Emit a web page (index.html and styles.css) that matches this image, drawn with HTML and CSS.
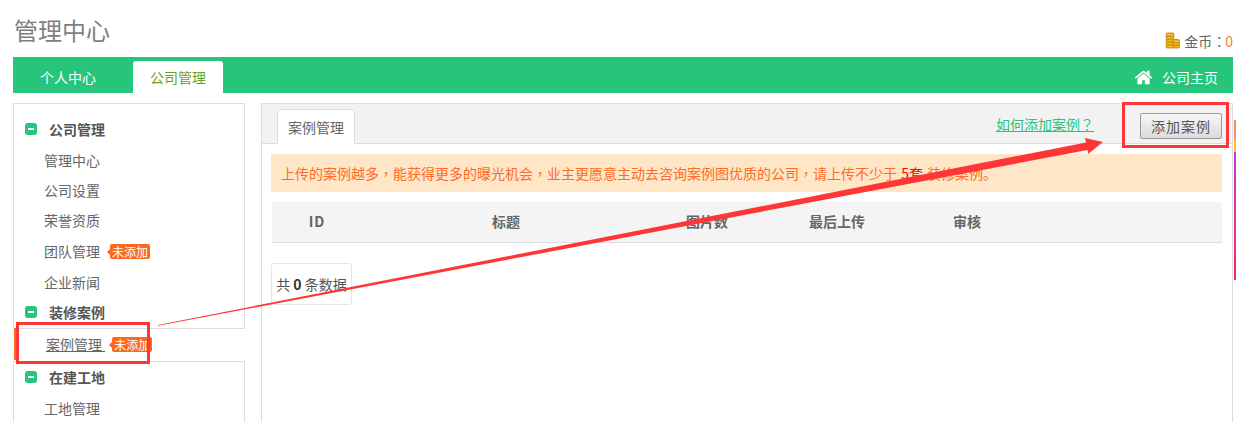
FILE: index.html
```html
<!DOCTYPE html>
<html lang="zh-CN">
<head>
<meta charset="utf-8">
<title>管理中心</title>
<link rel="stylesheet" href="styles.css">
</head>
<body>
<div class="page">
  <header class="top">
    <h1 class="title">管理中心</h1>
    <div class="gold">
      <svg class="coins" viewBox="0 0 15 17" aria-hidden="true">
        <g fill="#f5b81f" stroke="#b87a08" stroke-width=".8">
          <rect x="1" y="12.500" width="8" height="3.500" rx="1.600"/>
          <rect x="1" y="9.500" width="8" height="3.500" rx="1.600"/>
          <rect x="1" y="6.500" width="8" height="3.500" rx="1.600"/>
          <rect x="1" y="3.700" width="8" height="3.500" rx="1.600"/>
          <rect x="1" y="1" width="8" height="3.500" rx="1.600"/>
          <rect x="8" y="12.500" width="6.500" height="3.500" rx="1.500"/>
          <rect x="8" y="10" width="6.500" height="3.500" rx="1.500"/>
          <rect x="8" y="7.500" width="6.500" height="3.500" rx="1.500"/>
        </g>
      </svg>
      <span>金币<span class="pt" lang="zh-TW">：</span></span><span class="gold-num">0</span>
    </div>
  </header>

  <nav class="nav">
    <a class="nav-item">个人中心</a>
    <a class="nav-item nav-active">公司管理</a>
    <a class="nav-home">
      <svg class="home" viewBox="0 0 1792 1792" aria-hidden="true"><path fill="#fff" d="M1472 992v480q0 26-19 45t-45 19h-384v-384h-256v384h-384q-26 0-45-19t-19-45v-480q0-1 .5-3t.5-3l575-474 575 474q1 2 1 6zm223-69l-62 74q-8 9-21 11h-3q-13 0-21-7l-692-577-692 577q-12 8-24 7-13-2-21-11l-62-74q-8-10-7-23.5t11-21.5l719-599q32-26 76-26t76 26l244 204v-195q0-14 9-23t23-9h192q14 0 23 9t9 23v408l219 182q10 8 11 21.5t-7 23.5z"/></svg>
      <span>公司主页</span>
    </a>
  </nav>

  <div class="content">
    <aside class="side">
      <div class="box box-first">
        <div class="head"><i class="minus"></i>公司管理</div>
        <a class="item">管理中心</a>
        <a class="item">公司设置</a>
        <a class="item">荣誉资质</a>
        <a class="item item-tall">团队管理<span class="badge">未添加</span></a>
        <a class="item">企业新闻</a>
        <div class="head"><i class="minus"></i>装修案例</div>
      </div>
      <div class="current">
        <a class="current-link">案例管理 </a><span class="badge badge-current">未添加</span>
      </div>
      <div class="box box-second">
        <div class="head"><i class="minus"></i>在建工地</div>
        <a class="item">工地管理</a>
      </div>
    </aside>

    <main class="main">
      <div class="tabs">
        <a class="tab">案例管理</a>
        <a class="help">如何添加案例<span class="pt" lang="zh-TW">？</span></a>
        <button class="add" type="button">添加案例</button>
      </div>
      <div class="body">
        <p class="notice">上传的案例越多<span class="pt" lang="zh-TW">，</span>能获得更多的曝光机会<span class="pt" lang="zh-TW">，</span>业主更愿意主动去咨询案例图优质的公司<span class="pt" lang="zh-TW">，</span>请上传不少于 <b class="notice-num">5套</b> 装修案例。</p>
        <table class="grid">
          <colgroup>
            <col class="c1"><col class="c2"><col class="c3"><col class="c4"><col class="c5"><col>
          </colgroup>
          <thead>
            <tr><th class="th-id">ID</th><th>标题</th><th>图片数</th><th>最后上传</th><th>审核</th><th></th></tr>
          </thead>
        </table>
        <div class="pager">共 <b>0</b> 条数据</div>
      </div>
    </main>
  </div>
</div>

<div class="strip"></div>

<svg class="marks" viewBox="0 0 1236 422" aria-hidden="true">
  <rect class="mark-box" x="17.500" y="323.500" width="131" height="39"/>
  <rect class="mark-box" x="1123.500" y="103.500" width="104" height="43"/>
  <polygon class="mark-arrow" points="158,325 1086,142.500 1085,138 1103,142 1088,154 1087.500,150 158,325.800"/>
</svg>
</body>
</html>
```
FILE: styles.css
```css
* { box-sizing: border-box; }
html, body { margin: 0; height: 422px; overflow: hidden; background: #fff; }
body {
  position: relative;
  font: 14px/20px "Noto Sans CJK SC", "Liberation Sans", sans-serif;
  color: #666;
}
a { color: inherit; }
.pt { font-family: "Noto Sans CJK TC", "Noto Sans CJK SC", sans-serif; }
.page { width: 1233px; padding-left: 13px; }

.top { height: 57px; display: flex; justify-content: space-between; align-items: flex-end; }
.title { margin: 0 0 11px 1px; font-size: 24px; line-height: 32px; font-weight: 400; color: #808080; }
.gold { display: flex; align-items: center; height: 20px; margin-bottom: 6px; color: #666; white-space: nowrap; }
.coins { width: 15px; height: 17px; margin-right: 4px; margin-top: -2px; }
.gold-num { color: #ff7a45; margin-left: -1px; }

.nav { height: 36px; background: #27c47c; display: flex; align-items: flex-end; color: #fff; }
.nav-item { width: 90px; height: 32px; line-height: 32px; text-align: center; border-radius: 3px 3px 0 0; }
.nav-item:first-child { margin-left: 10px; }
.nav-item + .nav-item { margin-left: 20px; }
.nav-active { background: #fff; color: #66a31c; }
.nav-home { margin-left: auto; margin-right: 15px; height: 36px; padding-top: 4px; display: flex; align-items: center; gap: 9px; }
.home { width: 19px; height: 19px; }

.content { display: flex; gap: 16px; margin-top: 10px; }
.side { width: 232px; flex: none; }
.box { border: 1px solid #ddd; background: #fff; }
.box-first { height: 226px; padding-top: 10px; }
.box-second { height: 61px; border-bottom: 0; overflow: hidden; }
.head { display: flex; align-items: center; height: 31px; padding: 0 0 2px 11px; font-weight: 700; color: #555; }
.minus { position: relative; width: 12px; height: 12px; margin-right: 12px; border-radius: 3px; background: #27c47c; }
.minus::after { content: ""; position: absolute; left: 3px; top: 5px; width: 6px; height: 2px; background: #fff; }
.item { display: flex; align-items: center; height: 30px; padding-left: 30px; color: #666; }
.item-tall { height: 32px; }
.badge {
  position: relative;
  margin-left: 10px;
  width: 40px;
  height: 15px;
  border-radius: 2px;
  background: #f96a21;
  color: #fff;
  font-size: 12px;
  line-height: 15px;
  text-align: center;
  white-space: nowrap;
}
.badge::before {
  content: "";
  position: absolute;
  left: -3px;
  top: 5px;
  border-style: solid;
  border-width: 3px 3px 3px 0;
  border-color: transparent #f96a21 transparent transparent;
}
.current { height: 32px; display: flex; align-items: center; padding-left: 30px; border-left: 2px solid #f96a21; margin: -1px 0 1px 1px; }
.current-link { text-decoration: underline; white-space: pre; color: #666; }
.badge-current { margin-left: 7px; }

.main { width: 972px; height: 319px; border: 1px solid #ddd; border-bottom: 0; background: #fff; }
.tabs { height: 40px; background: #f2f2f2; border-bottom: 1px solid #ddd; display: flex; align-items: flex-start; padding-left: 15px; }
.tab { width: 78px; height: 35px; margin-top: 5px; background: #fff; border: 1px solid #ddd; border-bottom: 0; border-radius: 3px 3px 0 0; text-align: center; line-height: 35px; }
.help { margin-left: auto; margin-top: 10px; color: #27c47c; text-decoration: underline; }
.add {
  width: 82px;
  height: 26px;
  margin: 9px 10px 0 46px;
  padding: 0;
  border: 1px solid #999;
  border-radius: 2px;
  background: linear-gradient(#f6f6f6, #dcdcdc);
  font: inherit;
  line-height: 24px;
  letter-spacing: 1px;
  color: #555;
}
.body { padding: 10px 10px 0 9px; }
.notice { margin: 0; height: 38px; padding-left: 10px; line-height: 38px; background: #fee6c6; color: #ff6a26; }
.notice-num { font-weight: 400; color: #f00; margin: 0 1px; }
.grid { margin: 10px 0 0 1px; width: 950px; table-layout: fixed; border-collapse: collapse; }
.c1 { width: 88px; } .c2 { width: 292px; } .c3 { width: 110px; } .c4 { width: 150px; } .c5 { width: 110px; }
.grid th { height: 40px; padding: 0 0 2px; background: #f4f4f4; border-bottom: 1px solid #ddd; color: #666; font-weight: 700; text-align: center; }
.grid .th-id { letter-spacing: 1px; padding-left: 2px; }
.pager { width: 81px; height: 42px; margin-top: 20px; border: 1px solid #e6e6e6; border-radius: 3px; line-height: 40px; text-align: center; white-space: nowrap; color: #555; }
.pager b { color: #333; }

.strip { position: absolute; left: 1234px; top: 120px; width: 2px; height: 160px; background: linear-gradient(#f8857a 0, #f8857a 12%, #ffc107 12%, #ffc107 20%, #c53ad6 20%, #ea2f8f 70%, #f5255f 100%); }
.marks { position: absolute; left: 0; top: 0; width: 1236px; height: 422px; pointer-events: none; }
.mark-box { fill: none; stroke: #ff3636; stroke-width: 3; }
.mark-arrow { fill: #ff3636; }
```
